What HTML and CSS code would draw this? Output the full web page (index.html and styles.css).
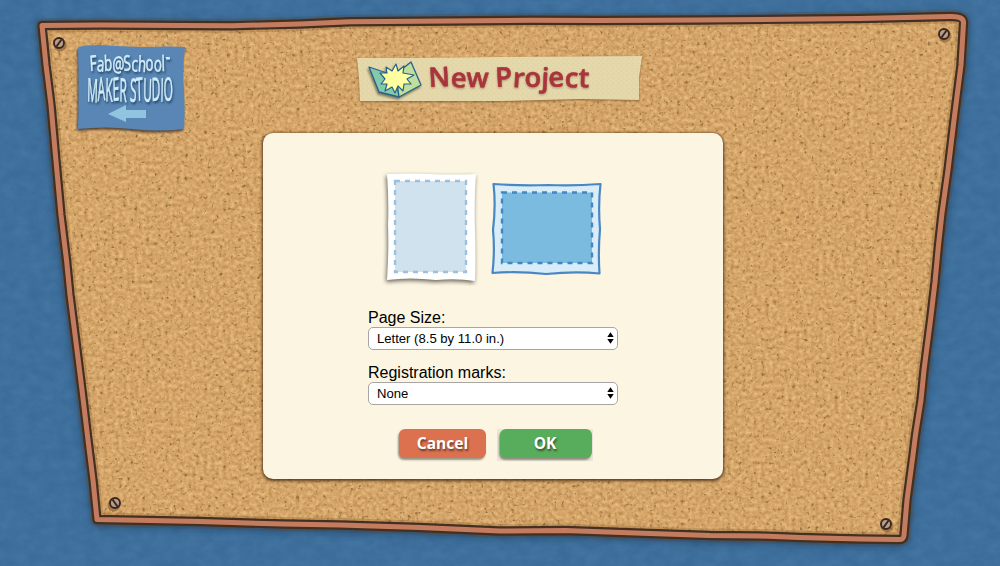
FILE: index.html
```
<!DOCTYPE html>
<html lang="en">
<head>
<meta charset="utf-8">
<title>New Project</title>
<link rel="stylesheet" href="styles.css">
</head>
<body>
<svg class="backdrop" viewBox="0 0 1000 566" aria-hidden="true">
  <defs>
    <filter id="felt" x="0" y="0" width="100%" height="100%" color-interpolation-filters="sRGB">
      <feTurbulence type="fractalNoise" baseFrequency="0.07 0.1" numOctaves="3" seed="4"/>
      <feColorMatrix values="0.05 0 0 0 0.222  0.06 0 0 0 0.41  0.06 0 0 0 0.585  0 0 0 0 1"/>
    </filter>
    <filter id="cork" x="0" y="0" width="100%" height="100%" color-interpolation-filters="sRGB">
      <feTurbulence type="fractalNoise" baseFrequency="0.26" numOctaves="2" seed="11" result="n"/>
      <feColorMatrix in="n" values="0.22 0 0 0 0.725  0.27 0 0 0 0.515  0.27 0 0 0 0.28  0 0 0 0 1" result="base"/>
      <feColorMatrix in="n" values="0 0 0 0 0.56  0 0 0 0 0.42  0 0 0 0 0.24  0 4.5 0 0 -2.85" result="specks"/>
      <feMerge result="m"><feMergeNode in="base"/><feMergeNode in="specks"/></feMerge>
      <feComposite in="m" in2="SourceGraphic" operator="in"/>
    </filter>
    <filter id="soft" x="-10%" y="-10%" width="120%" height="120%"><feGaussianBlur stdDeviation="4"/></filter>
    <path id="rim" d="M42 25.500 L100 25 L180 25.500 L233 25.700 L300 24 L350 21.700 L450 21 L530 20.300 L600 20.500 L700 20 L860 18.500 L950 16.500 Q964 16 963.500 23 L961 65 L954 120 L948 170 L942 213 L938.500 245 L935 282 L930.500 320 L924 370 L921 400 L915.500 435 L913 455 L907 500 L904 535 Q904 540 898 539.500 L860 539 L800 537.500 L760 536 L710 535.500 L650 533.500 L565 530.500 L500 531 L420 527.500 L340 525 L283 524 L200 521.500 L150 520.500 L97 519.500 L93 480 L88 440 L82 390 L77 350 L70 295 L66.500 260 L61 215 L55 150 L51 105 L46 65 Z"/>
    <g id="screw">
      <circle cx="1" cy="2" r="6.500" fill="#5a3815" opacity=".4"/>
      <circle r="5" fill="#b89d8b" stroke="#39271e" stroke-width="1.900"/>
      <path d="M-2.600 3.600 L2.600 -3.600" stroke="#39271e" stroke-width="1.800"/>
    </g>
  </defs>
  <rect width="1000" height="566" filter="url(#felt)"/>
  <use href="#rim" y="2" fill="#142f49" stroke="#142f49" stroke-width="10" opacity=".55" filter="url(#soft)"/>
  <use href="#rim" fill="#d5a367" filter="url(#cork)"/>
  <use href="#rim" fill="none" stroke="#694220" stroke-width="14" stroke-linejoin="round" opacity=".22"/>
  <use href="#rim" fill="none" stroke="#44301f" stroke-width="9.400" stroke-linejoin="round"/>
  <use href="#rim" fill="none" stroke="#c47c60" stroke-width="5" stroke-linejoin="round"/>
  <use href="#screw" x="59" y="43"/>
  <use href="#screw" x="944" y="34"/>
  <use href="#screw" transform="translate(115 503) scale(-1 1)"/>
  <use href="#screw" x="886" y="524"/>
</svg>

<div class="screen">
  <header class="header">
    <a class="home" aria-label="Home">
      <svg class="home-art" width="110" height="90" viewBox="76 43 110 90">
        <path class="patch" d="M78 48 Q80 45 100 45 Q130 47 150 47 Q170 46 185 47 Q182 70 184 90 Q185 110 184 129 Q160 132 132 129 Q105 126 78 129 Q79 90 78 48Z"/>
        <g class="lettering">
          <text x="90" y="71" font-size="21" textLength="75" lengthAdjust="spacingAndGlyphs" rotate="-4 4 -3 3 -6 4 5 -4 3 -2">Fab@School</text>
          <text x="166" y="61" font-size="5">™</text>
          <text font-size="32" textLength="86" lengthAdjust="spacingAndGlyphs" rotate="3 -3 2 -3 3 0 4 -3 3 -2 3 -2" transform="translate(87 101)">MAKER STUDIO</text>
        </g>
        <path fill="#90c4df" d="M108 114 L126 105 V110 H146 V118 H126 V122Z"/>
      </svg>
    </a>
    <h1 class="title">
      <svg width="288" height="50" viewBox="355 54 288 50">
        <defs>
          <pattern id="weave" width="5" height="5" patternUnits="userSpaceOnUse">
            <rect width="5" height="5" fill="#e4d7aa"/>
            <path d="M0 1H3M2 3.500H5" stroke="#dfd1a1" stroke-width=".7"/>
            <path d="M4 0V2M1 2V4" stroke="#e9dcb2" stroke-width=".7"/>
          </pattern>
        </defs>
        <path class="banner" fill="url(#weave)" d="M357 58 L410 58 L500 57 L642 56 L639 78 L639 100 L580 99 L500 101 L360 101 L359 79Z"/>
        <g class="emblem" stroke="#27618b" stroke-linejoin="round">
          <path d="M369 67 L396 76 L399 97 L379 92Z" fill="#83c9ac"/>
          <path d="M396 74 L411 62 L421 85 L399 97Z" fill="#bfdf9f"/>
          <path fill="#ffffa0" stroke-width="1.200" d="M396 64 L398 71 L404 66 L403 73 L414 75 L407 79 L411 84 L404 84 L403 91 L398 86 L395 93 L392 87 L385 91 L387 84 L381 84 L385 79 L380 73 L387 73 L386 67 L392 71Z"/>
        </g>
        <text class="title-text" x="429" y="87" textLength="160" lengthAdjust="spacingAndGlyphs" rotate="-3 2 1 0 -3 3 0 3 -3 2 2">New Project</text>
      </svg>
    </h1>
  </header>

  <main class="dialog">
    <div class="orientations">
      <svg class="portrait" width="99" height="118" viewBox="382 168 99 118">
        <path class="paper" d="M387 174 Q410 173 430 174 T476 174 Q474 200 475 230 T475 281 Q457 278 436 280 Q410 277 387 280 Q389 250 388 225 Q389 200 387 174Z"/>
        <rect x="395" y="181" width="71" height="91" fill="#d0e2ed" stroke="#9cc0df" stroke-width="2.400" stroke-dasharray="5 5"/>
      </svg>
      <svg class="landscape" width="114" height="96" viewBox="490 181 114 96">
        <path d="M493.500 184 Q520 186 548 185 Q575 186 600.500 184 Q598 206 600 229 Q598 252 599.500 273.500 Q575 271 546 274 Q518 271 492.500 273 Q495 250 493 230 Q496 205 493.500 184Z" fill="#d9edf8" stroke="#4987c4" stroke-width="2.200" stroke-linejoin="round"/>
        <rect x="502" y="192.500" width="90" height="70.500" fill="#7bbbdf" stroke="#4485c4" stroke-width="2.400" stroke-dasharray="5 5"/>
      </svg>
    </div>
    <div class="fields">
      <label class="field">Page Size:
        <span class="control">
          <select class="select"><option>Letter (8.5 by 11.0 in.)</option></select>
          <svg class="arrows" width="7" height="12" viewBox="0 0 7 12"><path d="M.3 5 L3.500 .3 L6.700 5Z M.3 7 H6.700 L3.500 11.700Z"/></svg>
        </span>
      </label>
      <label class="field">Registration marks:
        <span class="control">
          <select class="select"><option>None</option></select>
          <svg class="arrows" width="7" height="12" viewBox="0 0 7 12"><path d="M.3 5 L3.500 .3 L6.700 5Z M.3 7 H6.700 L3.500 11.700Z"/></svg>
        </span>
      </label>
    </div>
    <div class="actions">
      <button class="button cancel">Cancel</button>
      <span class="ok-plate"><button class="button ok">OK</button></span>
    </div>
  </main>
</div>
</body>
</html>
```

FILE: styles.css
```
* { box-sizing: border-box; }
body { margin: 0; width: 1000px; height: 566px; overflow: hidden; background: #3f719f; font-family: "Liberation Sans", Arial, sans-serif; color: #000; }
svg { display: block; }
.backdrop { position: absolute; inset: 0; width: 1000px; height: 566px; }
.screen { position: relative; height: 566px; padding-top: 43px; }
.header { display: flex; align-items: flex-start; height: 90px; padding-left: 76px; }
.home-art { overflow: visible; }
.patch { fill: #5986b4; filter: drop-shadow(-1px 2px 1px rgba(50, 40, 35, .75)); }
.lettering { fill: #d0edf8; stroke: #d0edf8; stroke-width: .7px; font-family: "Open Sans", sans-serif; filter: drop-shadow(1px 2px 1px #27486f); }
.title { margin: 11px 0 0 169px; font-size: 27px; }
.title svg { overflow: visible; }
.banner { filter: drop-shadow(0 1px 1px rgba(92, 57, 24, .6)); }
.emblem { stroke-width: 1.3px; filter: drop-shadow(-1px 2px 1px rgba(50, 50, 30, .55)); }
.title-text { fill: #a9343b; font: 600 27px "Open Sans", sans-serif; stroke: #a9343b; stroke-width: .5px; stroke-linejoin: round; filter: drop-shadow(0 1px 1px rgba(80, 35, 25, .4)); }
.dialog { width: 460px; height: 346px; margin-left: 263px; padding: 35px 105px 0; background: #fbf5e2; border-radius: 10px; box-shadow: 0 1px 3px 1px rgba(60, 35, 12, .8); }
.orientations { display: flex; gap: 9px; margin-left: 14px; width: 222px; height: 118px; }
.orientations svg { flex: none; }
.landscape { margin-top: 13px; }
.paper { fill: #fff; filter: drop-shadow(-1px 2px 2px rgba(55, 50, 40, .75)); }
.fields { display: flex; flex-direction: column; gap: 13px; margin-top: 22px; }
.field { display: block; height: 42px; font-size: 16px; line-height: 19px; }
.control { display: flex; position: relative; width: 250px; height: 23px; }
.select { appearance: none; width: 250px; height: 23px; margin: 0; padding: 0 8px; border: 1px solid #a6a6a6; border-radius: 5px; background: #fff; color: #000; font: 13.1px "Liberation Sans", Arial, sans-serif; }
.arrows { position: absolute; right: 4px; top: 5px; }
.actions { display: flex; margin: 24px 0 0 30px; gap: 11px; }
.button { height: 29px; padding: 0 0 1px; border: 0; border-radius: 6px; color: #fff; font: 700 15.5px/28px "Open Sans", sans-serif; text-shadow: 1px 2px 2px rgba(40, 30, 20, .65); box-shadow: -1px 2px 2px rgba(60, 50, 40, .5); }
.cancel { width: 87px; margin-left: 1px; background: #db714e; }
.ok-plate { display: flex; width: 96px; height: 32px; padding-left: 3px; background: #ebe6d9; }
.ok { width: 92px; padding-right: 2px; background: #57ad5c; }
```
